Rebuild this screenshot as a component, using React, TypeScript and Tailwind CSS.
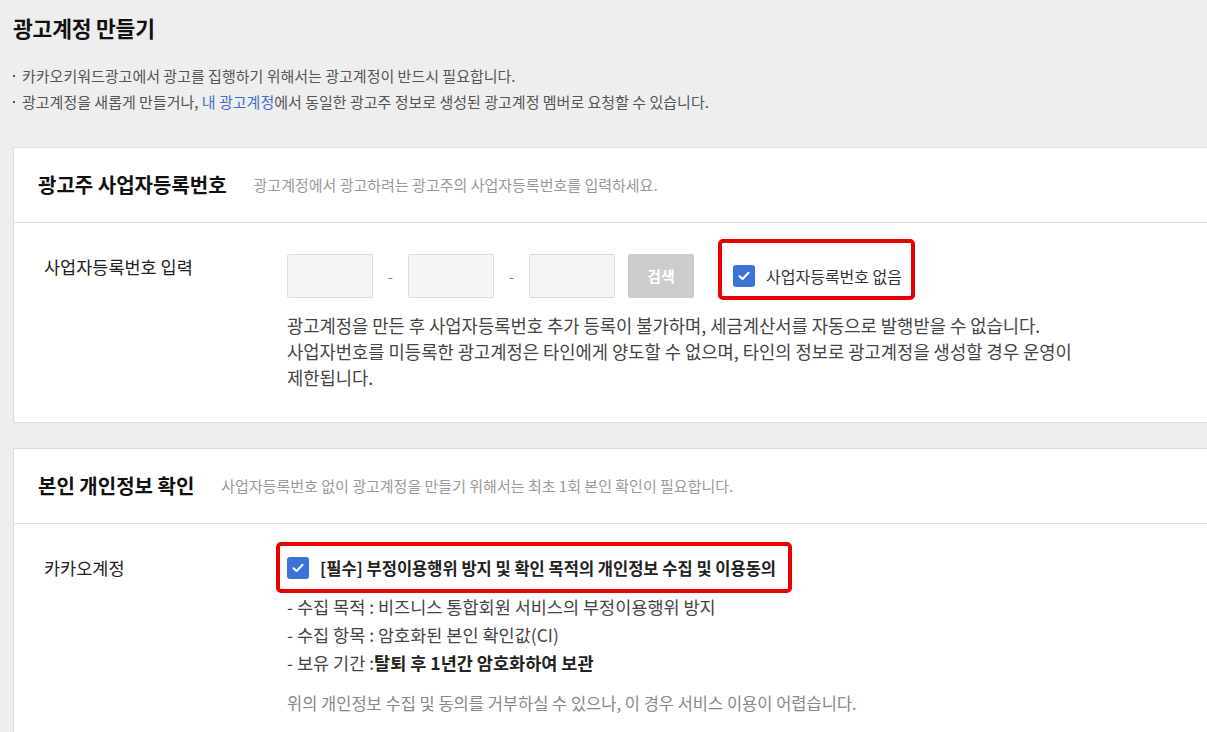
import React from "react";

const font = { fontFamily: '"Noto Sans CJK KR", "Noto Sans", sans-serif' };

function Check() {
  return (
    <span className="flex h-[22px] w-[22px] shrink-0 items-center justify-center rounded-[3px] bg-[#3b73d9]">
      <svg width="12" height="10" viewBox="0 0 12 10" fill="none">
        <path d="M1.5 5.2 L4.6 8 L10.5 1.8" stroke="white" strokeWidth="2" strokeLinecap="round" strokeLinejoin="round" />
      </svg>
    </span>
  );
}

function Input() {
  return <div className="h-[44px] w-[86px] rounded-[2px] border border-[#dcdcdc] bg-[#f5f5f5]" />;
}

function Dash() {
  return <span className="w-[35px] text-center text-[14px] text-[#777]">-</span>;
}

export default function App() {
  return (
    <div className="min-h-[732px] w-full overflow-hidden bg-[#eeeeee] pl-[13px] text-[#333]" style={font}>
      <h1 className="pt-[13px] text-[21.5px] font-bold leading-[30px] tracking-[-0.2px] text-[#111]">광고계정 만들기</h1>
      <ul className="mt-[20px] text-[15px] leading-[26px] text-[#555]">
        <li className="flex items-center">
          <span className="mr-[7px] h-[2px] w-[2px] bg-[#555]" />
          카카오키워드광고에서 광고를 집행하기 위해서는 광고계정이 반드시 필요합니다.
        </li>
        <li className="flex items-center">
          <span className="mr-[7px] h-[2px] w-[2px] bg-[#555]" />
          <span>
            광고계정을 새롭게 만들거나, <span className="text-[#3f6fd1]">내 광고계정</span>에서 동일한 광고주 정보로 생성된 광고계정 멤버로 요청할 수 있습니다.
          </span>
        </li>
      </ul>

      {/* Card 1 */}
      <section className="mt-[32px] border-y border-l border-[#dddddd] bg-white">
        <div className="flex h-[75px] items-center border-b border-[#dddddd] pl-[24px]">
          <h2 className="text-[20px] font-bold text-[#111]">광고주 사업자등록번호</h2>
          <p className="ml-[27px] text-[15px] text-[#999]">광고계정에서 광고하려는 광고주의 사업자등록번호를 입력하세요.</p>
        </div>
        <div className="flex pb-[32px] pl-[30px] pt-[31px]">
          <div className="w-[243px] pt-[1px] text-[17.5px] leading-[24px] text-[#222]">사업자등록번호 입력</div>
          <div>
            <div className="flex items-center">
              <Input />
              <Dash />
              <Input />
              <Dash />
              <Input />
              <button className="ml-[13px] h-[44px] w-[66px] rounded-[2px] bg-[#cccccc] text-[15px] font-bold text-white">검색</button>
              <label className="relative ml-[39px] flex items-center">
                <span className="pointer-events-none absolute -bottom-[12px] -left-[15px] -right-[13px] -top-[25px] rounded-[5px] border-[4px] border-[#e60000]" />
                <Check />
                <span className="ml-[11px] text-[16px] text-[#333]">사업자등록번호 없음</span>
              </label>
            </div>
            <p className="mt-[14px] max-w-[820px] break-keep text-[17.7px] leading-[26px] text-[#444]">
              광고계정을 만든 후 사업자등록번호 추가 등록이 불가하며, 세금계산서를 자동으로 발행받을 수 없습니다.
              <br />
              사업자번호를 미등록한 광고계정은 타인에게 양도할 수 없으며, 타인의 정보로 광고계정을 생성할 경우 운영이 제한됩니다.
            </p>
          </div>
        </div>
      </section>

      {/* Card 2 */}
      <section className="mt-[25px] border-y border-l border-[#dddddd] bg-white">
        <div className="flex h-[75px] items-center border-b border-[#dddddd] pl-[24px]">
          <h2 className="text-[20px] font-bold text-[#111]">본인 개인정보 확인</h2>
          <p className="ml-[27px] text-[15px] text-[#999]">사업자등록번호 없이 광고계정을 만들기 위해서는 최초 1회 본인 확인이 필요합니다.</p>
        </div>
        <div className="flex pb-[20px] pl-[30px] pt-[32px]">
          <div className="w-[243px] text-[17.5px] leading-[24px] text-[#222]">카카오계정</div>
          <div>
            <label className="relative flex w-fit items-center">
              <span className="pointer-events-none absolute -bottom-[12px] -left-[11px] -right-[16px] -top-[14px] rounded-[5px] border-[4px] border-[#e60000]" />
              <Check />
              <span className="ml-[11px] text-[16.5px] font-bold text-[#222]">[필수] 부정이용행위 방지 및 확인 목적의 개인정보 수집 및 이용동의</span>
            </label>
            <ul className="mt-[12px] text-[17.5px] leading-[28px] text-[#444]">
              <li>- 수집 목적 : 비즈니스 통합회원 서비스의 부정이용행위 방지</li>
              <li>- 수집 항목 : 암호화된 본인 확인값(CI)</li>
              <li>
                - 보유 기간 :<span className="font-bold text-[#222]">탈퇴 후 1년간 암호화하여 보관</span>
              </li>
            </ul>
            <p className="mt-[13px] text-[16.5px] leading-[26px] text-[#888]">위의 개인정보 수집 및 동의를 거부하실 수 있으나, 이 경우 서비스 이용이 어렵습니다.</p>
          </div>
        </div>
      </section>
    </div>
  );
}
